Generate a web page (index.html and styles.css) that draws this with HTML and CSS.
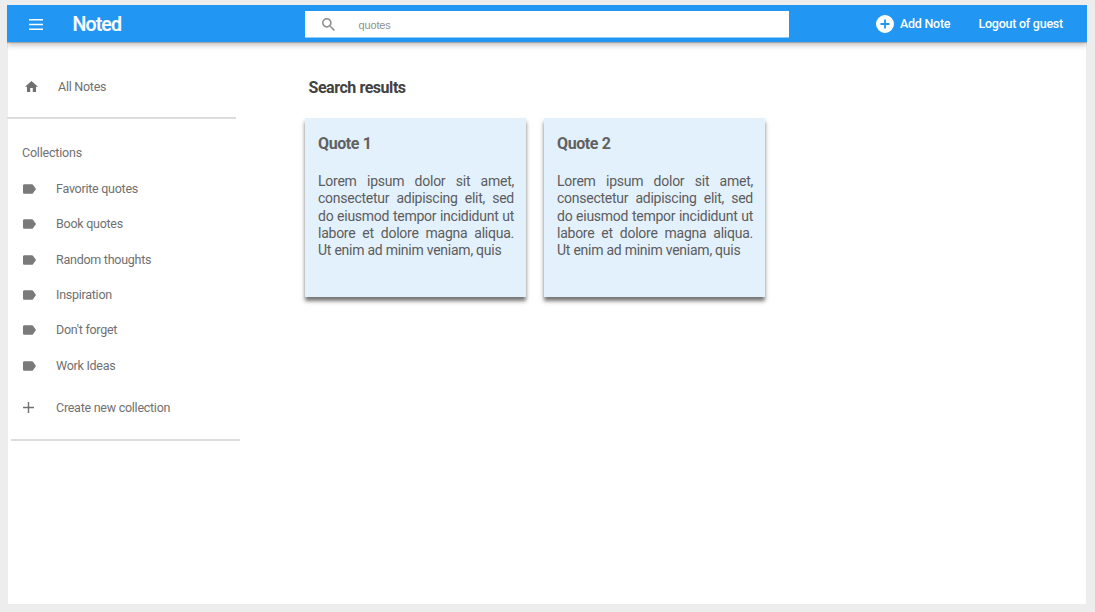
FILE: index.html
```html
<!DOCTYPE html>
<html lang="en">
<head>
<meta charset="utf-8">
<title>Noted</title>
<link rel="stylesheet" href="styles.css">
</head>
<body>
<div class="app">
  <header class="topbar">
    <svg class="menu-icon" viewBox="0 0 14 11"><path d="M0 0h14v1.5H0zM0 4.8h14v1.5H0zM0 9.5h14v1.5H0z"/></svg>
    <h1 class="brand"><span>Noted</span></h1>
    <div class="search">
      <svg class="search-icon" viewBox="3 3 17.5 17.5"><path d="M15.5 14h-.79l-.28-.27A6.47 6.47 0 0 0 16 9.500 6.500 6.500 0 1 0 9.500 16c1.610 0 3.090-.59 4.230-1.570l.27.28v.79l5 4.990L20.490 19l-4.990-5zm-6 0C7.010 14 5 11.990 5 9.500S7.010 5 9.500 5 14 7.010 14 9.500 11.990 14 9.500 14z"/></svg>
      <span class="search-text">quotes</span>
    </div>
    <nav class="actions">
      <a class="add"><svg class="add-icon" viewBox="2 2 20 20"><path d="M12 2a10 10 0 1 0 0 20 10 10 0 0 0 0-20zm5 11h-4v4h-2v-4H7v-2h4V7h2v4h4v2z"/></svg><span class="add-text">Add Note</span></a>
      <a class="logout"><span>Logout of guest</span></a>
    </nav>
  </header>
  <div class="content">
    <aside class="sidebar">
      <a class="home"><svg class="home-icon" viewBox="2 3 20 17"><path d="M10 20v-6h4v6h5v-8h3L12 3 2 12h3v8z"/></svg><span class="all">All Notes</span></a>
      <hr class="rule">
      <h2 class="label"><span>Collections</span></h2>
      <ul class="list">
        <li class="item"><svg class="tag" viewBox="3 5 19 14"><path d="M17.630 5.840C17.270 5.330 16.670 5 16 5L5 5.010C3.900 5.010 3 5.900 3 7v10c0 1.100.9 1.990 2 1.990L16 19c.67 0 1.270-.33 1.630-.84L22 12l-4.370-6.160z"/></svg><span>Favorite quotes</span></li>
        <li class="item"><svg class="tag" viewBox="3 5 19 14"><path d="M17.630 5.840C17.270 5.330 16.670 5 16 5L5 5.010C3.900 5.010 3 5.900 3 7v10c0 1.100.9 1.990 2 1.990L16 19c.67 0 1.270-.33 1.630-.84L22 12l-4.370-6.160z"/></svg><span>Book quotes</span></li>
        <li class="item"><svg class="tag" viewBox="3 5 19 14"><path d="M17.630 5.840C17.270 5.330 16.670 5 16 5L5 5.010C3.900 5.010 3 5.900 3 7v10c0 1.100.9 1.990 2 1.990L16 19c.67 0 1.270-.33 1.630-.84L22 12l-4.370-6.160z"/></svg><span>Random thoughts</span></li>
        <li class="item"><svg class="tag" viewBox="3 5 19 14"><path d="M17.630 5.840C17.270 5.330 16.670 5 16 5L5 5.010C3.900 5.010 3 5.900 3 7v10c0 1.100.9 1.990 2 1.990L16 19c.67 0 1.270-.33 1.630-.84L22 12l-4.370-6.160z"/></svg><span>Inspiration</span></li>
        <li class="item"><svg class="tag" viewBox="3 5 19 14"><path d="M17.630 5.840C17.270 5.330 16.670 5 16 5L5 5.010C3.900 5.010 3 5.900 3 7v10c0 1.100.9 1.990 2 1.990L16 19c.67 0 1.270-.33 1.630-.84L22 12l-4.370-6.160z"/></svg><span>Don't forget</span></li>
        <li class="item"><svg class="tag" viewBox="3 5 19 14"><path d="M17.630 5.840C17.270 5.330 16.670 5 16 5L5 5.010C3.900 5.010 3 5.900 3 7v10c0 1.100.9 1.990 2 1.990L16 19c.67 0 1.270-.33 1.630-.84L22 12l-4.370-6.160z"/></svg><span>Work Ideas</span></li>
      </ul>
      <a class="item create"><svg class="plus" viewBox="0 0 11 11"><path d="M4.800 0h1.400v4.800H11v1.400H6.200V11H4.800V6.200H0V4.800h4.800z"/></svg><span>Create new collection</span></a>
      <hr class="rule rule-end">
    </aside>
    <main class="results">
      <h2 class="heading"><span>Search results</span></h2>
      <div class="cards">
        <article class="card">
          <h3 class="card-title"><span>Quote 1</span></h3>
          <p class="card-text">Lorem ipsum dolor sit amet, consectetur adipiscing elit, sed do eiusmod tempor incididunt ut labore et dolore magna aliqua. Ut enim ad minim veniam, quis</p>
        </article>
        <article class="card">
          <h3 class="card-title"><span>Quote 2</span></h3>
          <p class="card-text">Lorem ipsum dolor sit amet, consectetur adipiscing elit, sed do eiusmod tempor incididunt ut labore et dolore magna aliqua. Ut enim ad minim veniam, quis</p>
        </article>
      </div>
    </main>
  </div>
</div>
</body>
</html>
```
FILE: styles.css
```css
* { box-sizing: border-box; }
body {
  margin: 0;
  height: 612px;
  padding: 5px 8px 8px 7px;
  background: #ededed;
  font-family: Roboto, sans-serif;
  color: #757575;
  overflow: hidden;
}
h1, h2, h3, p, ul { margin: 0; padding: 0; font-weight: 500; }
svg { display: block; flex: none; fill: currentColor; }
span { white-space: nowrap; }
.app { height: 599px; display: flex; flex-direction: column; }
.topbar {
  height: 37px;
  flex: none;
  display: flex;
  align-items: center;
  background: #2196f3;
  color: #fff;
  z-index: 1;
  box-shadow: 0 1px 1px rgba(0,0,0,.2), 0 3px 6px rgba(0,0,0,.25);
  clip-path: inset(0 0 -12px 0);
}
.menu-icon { width: 14px; height: 11px; margin: 2px 0 0 21.500px; }
.brand { width: 232px; margin-left: 30px; padding-top: 2px; font-size: 19.500px; line-height: 24px; letter-spacing: -.85px; -webkit-text-stroke: .2px #fff; }
.search {
  width: 484px;
  height: 27px;
  margin-top: 1px;
  padding-left: 17px;
  display: flex;
  align-items: center;
  background: #fff;
  border-bottom: 1px solid #90caf9;
}
.search-icon { width: 13px; height: 13px; margin-top: 2px; color: #8c8c8c; }
.search-text { margin: 2px 0 0 24px; font: 11px/14px "Liberation Sans", sans-serif; letter-spacing: -.15px; color: #8f8f8f; }
.actions { display: flex; align-items: center; font-size: 12.500px; font-weight: 500; line-height: 16px; letter-spacing: -.25px; }
.add { width: 103px; margin-left: 87px; display: flex; align-items: center; }
.add-icon { width: 18px; height: 18px; margin: 1px 6.500px 0 0; }
.content { flex: 1; display: flex; margin: 0 1px; background: #fff; }
.sidebar { width: 233px; padding-top: 37px; font-size: 12.500px; line-height: 16px; letter-spacing: -.26px; color: #707070; }
.home { display: flex; align-items: center; padding-left: 17px; height: 16px; }
.home-icon { width: 13px; height: 11px; margin-top: -1px; }
.all { margin-left: 20px; }
.rule { width: 229px; height: 2px; margin: 22px 0 0 -1px; border: 0; background: #dcdcdc; }
.label { margin: 26px 0 0 14px; font-size: 12.500px; font-weight: 400; line-height: 16px; letter-spacing: -.2px; }
.list { list-style: none; margin-top: 10.500px; font-weight: 400; }
.item { height: 35.300px; display: flex; align-items: center; padding-left: 15px; }
.tag { width: 13px; height: 10px; margin-right: 20px; color: #7a7a7a; }
.create { margin-top: 7px; }
.plus { width: 11px; height: 11px; margin-right: 22px; }
.rule-end { margin: 13px 0 0 3px; }
.results { padding: 35px 0 0 64px; }
.heading { height: 22px; padding-left: 3.500px; font-size: 16px; font-weight: 700; line-height: 22px; letter-spacing: -.45px; color: #424242; }
.cards { display: flex; gap: 18px; margin-top: 19px; }
.card {
  width: 221px;
  height: 179px;
  padding: 15px 12px 0 13px;
  background: #e3f1fd;
  color: #616161;
  box-shadow: 0 4px 4px rgba(0,0,0,.55);
}
.card-title { font-size: 16px; font-weight: 700; line-height: 21px; letter-spacing: -.4px; }
.card-text { margin-top: 19px; font-size: 14px; font-weight: 400; line-height: 17.300px; letter-spacing: -.25px; color: #5c5c5c; text-align: justify; }
```
